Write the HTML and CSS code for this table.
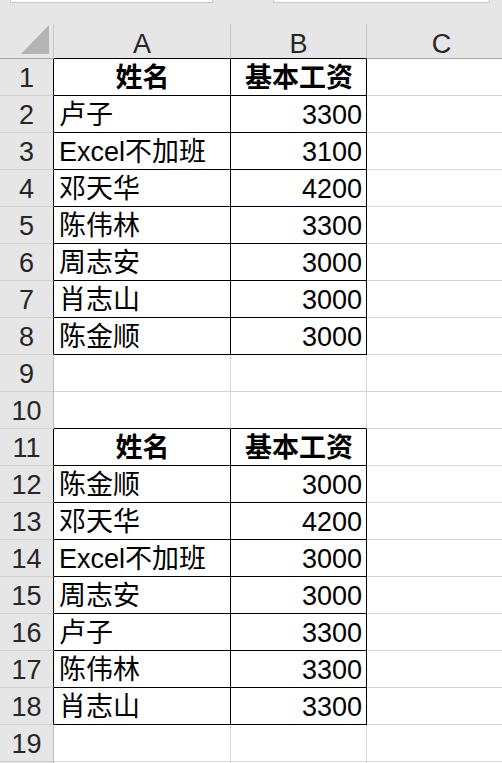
FILE: index.html
```html
<!DOCTYPE html>
<html lang="zh-CN">
<head>
<meta charset="utf-8">
<title>Sheet</title>
<link rel="stylesheet" href="styles.css">
</head>
<body>
<div class="app">
  <div class="topbar">
    <span class="box box-name"></span>
    <span class="box box-formula"></span>
  </div>
  <div class="sheet">
    <div class="ch corner"><svg width="29" height="30" viewBox="0 0 29 30"><polygon points="0,29 28,29 28,0" fill="#b4b4b4"/></svg></div>
    <div class="ch colA blk-b">A</div>
    <div class="ch blk-b">B</div>
    <div class="ch">C</div>

    <div class="rh edge">1</div><div class="c t hd">姓名</div><div class="c t hd">基本工资</div><div class="c"></div>
    <div class="rh edge">2</div><div class="c t">卢子</div><div class="c t num">3300</div><div class="c"></div>
    <div class="rh edge">3</div><div class="c t">Excel不加班</div><div class="c t num">3100</div><div class="c"></div>
    <div class="rh edge">4</div><div class="c t">邓天华</div><div class="c t num">4200</div><div class="c"></div>
    <div class="rh edge">5</div><div class="c t">陈伟林</div><div class="c t num">3300</div><div class="c"></div>
    <div class="rh edge">6</div><div class="c t">周志安</div><div class="c t num">3000</div><div class="c"></div>
    <div class="rh edge">7</div><div class="c t">肖志山</div><div class="c t num">3000</div><div class="c"></div>
    <div class="rh edge">8</div><div class="c t">陈金顺</div><div class="c t num">3000</div><div class="c"></div>
    <div class="rh">9</div><div class="c"></div><div class="c"></div><div class="c"></div>
    <div class="rh">10</div><div class="c blk-b"></div><div class="c blk-b"></div><div class="c"></div>
    <div class="rh edge">11</div><div class="c t hd">姓名</div><div class="c t hd">基本工资</div><div class="c"></div>
    <div class="rh edge">12</div><div class="c t">陈金顺</div><div class="c t num">3000</div><div class="c"></div>
    <div class="rh edge">13</div><div class="c t">邓天华</div><div class="c t num">4200</div><div class="c"></div>
    <div class="rh edge">14</div><div class="c t">Excel不加班</div><div class="c t num">3000</div><div class="c"></div>
    <div class="rh edge">15</div><div class="c t">周志安</div><div class="c t num">3000</div><div class="c"></div>
    <div class="rh edge">16</div><div class="c t">卢子</div><div class="c t num">3300</div><div class="c"></div>
    <div class="rh edge">17</div><div class="c t">陈伟林</div><div class="c t num">3300</div><div class="c"></div>
    <div class="rh edge">18</div><div class="c t">肖志山</div><div class="c t num">3300</div><div class="c"></div>
    <div class="rh">19</div><div class="c"></div><div class="c"></div><div class="c"></div>
    <div class="rh blank"></div><div class="c"></div><div class="c"></div><div class="c"></div>
  </div>
</div>
</body>
</html>
```
FILE: styles.css
```css
html, body {
  margin: 0;
  padding: 0;
  background: #ffffff;
  overflow: hidden;
}

.app {
  width: 502px;
  height: 763px;
  overflow: hidden;
  font-family: "Liberation Sans", "Noto Sans CJK SC", sans-serif;
}

.topbar {
  height: 24px;
  background: #e6e6e6;
  display: flex;
  align-items: flex-start;
  gap: 60px;
  padding-left: 10px;
  box-sizing: border-box;
}

.box {
  display: block;
  height: 2px;
  background: #ffffff;
  border: 1px solid #c8c8c8;
  border-top: none;
}

.box-name { width: 201px; }
.box-formula { width: 215px; }

.sheet {
  display: grid;
  grid-template-columns: 54px 177px 136px 150px;
  grid-template-rows: 35px;
  grid-auto-rows: 37px;
  width: 517px;
}

.sheet > div {
  box-sizing: border-box;
  border-right: 1px solid #d4d4d4;
  border-bottom: 1px solid #d4d4d4;
  font-size: 27px;
  line-height: 35px;
  padding-top: 2px;
  white-space: nowrap;
  overflow: hidden;
}

.ch {
  background: #e6e6e6;
  color: #262626;
  text-align: center;
  border-right-color: #c4c4c4 !important;
  border-bottom-color: #a6a6a6 !important;
  line-height: 36px !important;
}

.corner {
  display: flex;
  justify-content: flex-end;
  align-items: flex-end;
  padding: 0 3px 3px 0 !important;
}

.corner svg { display: block; }

.rh {
  background: #e6e6e6;
  color: #262626;
  text-align: center;
  border-right-color: #bdbdbd !important;
  border-bottom-color: #d0d0d0 !important;
}

.rh.edge { border-right-color: #000000 !important; }

.c {
  background: #ffffff;
  color: #000000;
  padding-right: 4px;
  padding-left: 5px;
}

.t {
  border-right-color: #000000 !important;
  border-bottom-color: #000000 !important;
}

.blk-b { border-bottom-color: #000000 !important; }

.hd {
  font-weight: bold;
  text-align: center;
}

.num { text-align: right; }
```
